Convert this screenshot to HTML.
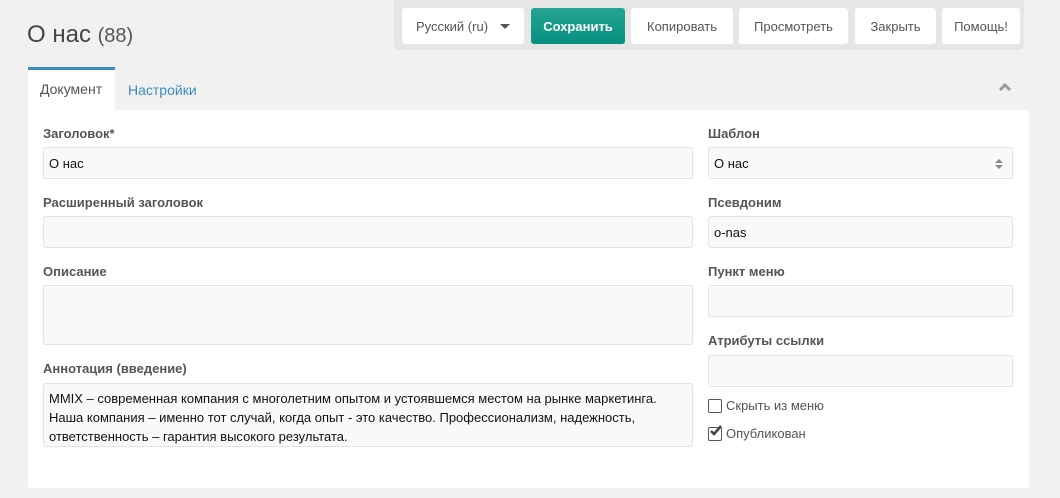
<!DOCTYPE html>
<html><head><meta charset="utf-8"><style>
*{box-sizing:border-box}
body{margin:0;width:1060px;height:498px;background:#f1f1f1;font-family:"Liberation Sans",Arial,sans-serif;position:relative;overflow:hidden;color:#333}
.abs{position:absolute}
h1{position:absolute;left:27px;top:21px;margin:0;font-weight:normal;font-size:24px;color:#444}
h1 small{font-size:20px;color:#555}
.bar{left:394px;top:0;width:630px;height:50px;background:#e6e6e6;border-radius:0 0 5px 5px}
.btn{position:absolute;top:8px;height:36px;background:#fff;border-radius:3px;font-size:13px;color:#555;display:flex;align-items:center;justify-content:center}
.save{background:linear-gradient(#27a592,#078f80);color:#fff;font-weight:bold}
.tab{font-size:14px}
.panel{left:28px;top:110px;width:1001px;height:378px;background:#fff;border-radius:0 0 3px 3px}
.lbl{position:absolute;font-size:13px;font-weight:bold;color:#555}
.in{position:absolute;background:#f9f9f9;border:1px solid #e3e3e3;border-radius:3px;font-size:13px;color:#111;padding:0 5px;display:flex;align-items:center}
.cb{position:absolute;font-size:13px;color:#555;display:flex;align-items:center}
.box{width:14px;height:14px;border:1.5px solid #555;border-radius:2px;margin-right:4px;position:relative}
</style></head><body>
<h1>О нас <small>(88)</small></h1>
<div class="abs bar"></div>
<div class="btn" style="left:402px;width:122px">Русский (ru)<span style="margin-left:12px;border-left:5px solid transparent;border-right:5px solid transparent;border-top:5px solid #555"></span></div>
<div class="btn save" style="left:531px;width:94px">Сохранить</div>
<div class="btn" style="left:631px;width:102px">Копировать</div>
<div class="btn" style="left:739px;width:109px">Просмотреть</div>
<div class="btn" style="left:855px;width:81px">Закрыть</div>
<div class="btn" style="left:942px;width:78px">Помощь!</div>
<div class="abs" style="left:28px;top:67px;width:87px;height:44px;background:#fff;border-top:3px solid #3c8dbc"></div>
<div class="abs tab" style="left:40px;top:81px;color:#555">Документ</div>
<div class="abs tab" style="left:128px;top:82px;color:#3c8dbc">Настройки</div>
<svg class="abs" style="left:998px;top:82px" width="14" height="10"><path d="M2 8 L7 3 L12 8" stroke="#999" stroke-width="3" fill="none"/></svg>
<div class="abs panel"></div>
<div class="lbl" style="left:43px;top:126px">Заголовок*</div>
<div class="in" style="left:43px;top:147px;width:650px;height:32px">О нас</div>
<div class="lbl" style="left:43px;top:195px">Расширенный заголовок</div>
<div class="in" style="left:43px;top:216px;width:650px;height:32px"></div>
<div class="lbl" style="left:43px;top:264px">Описание</div>
<div class="in" style="left:43px;top:285px;width:650px;height:60px"></div>
<div class="lbl" style="left:43px;top:361px">Аннотация (введение)</div>
<div class="in" style="left:43px;top:383px;width:650px;height:64px;display:block;padding:5px 30px 5px 5px;line-height:19px;font-size:13px">MMIX – современная компания с многолетним опытом и устоявшемся местом на рынке маркетинга. Наша компания – именно тот случай, когда опыт - это качество. Профессионализм, надежность, ответственность – гарантия высокого результата.</div>
<div class="lbl" style="left:708px;top:126px">Шаблон</div>
<div class="in" style="left:708px;top:147px;width:305px;height:32px">О нас<svg style="position:absolute;right:8px;top:10px" width="10" height="12"><path d="M1 5 L5 1 L9 5Z M1 7 L5 11 L9 7Z" fill="#888"/></svg></div>
<div class="lbl" style="left:708px;top:195px">Псевдоним</div>
<div class="in" style="left:708px;top:216px;width:305px;height:32px">o-nas</div>
<div class="lbl" style="left:708px;top:264px">Пункт меню</div>
<div class="in" style="left:708px;top:285px;width:305px;height:32px"></div>
<div class="lbl" style="left:708px;top:333px">Атрибуты ссылки</div>
<div class="in" style="left:708px;top:355px;width:305px;height:32px"></div>
<div class="cb" style="left:708px;top:398px"><span class="box"></span>Скрыть из меню</div>
<div class="cb" style="left:708px;top:426px"><span class="box"><svg style="position:absolute;left:0;top:-3px" width="15" height="14"><path d="M2 6 L5 9 L12 1" stroke="#444" stroke-width="2.5" fill="none"/></svg></span>Опубликован</div>
</body></html>
